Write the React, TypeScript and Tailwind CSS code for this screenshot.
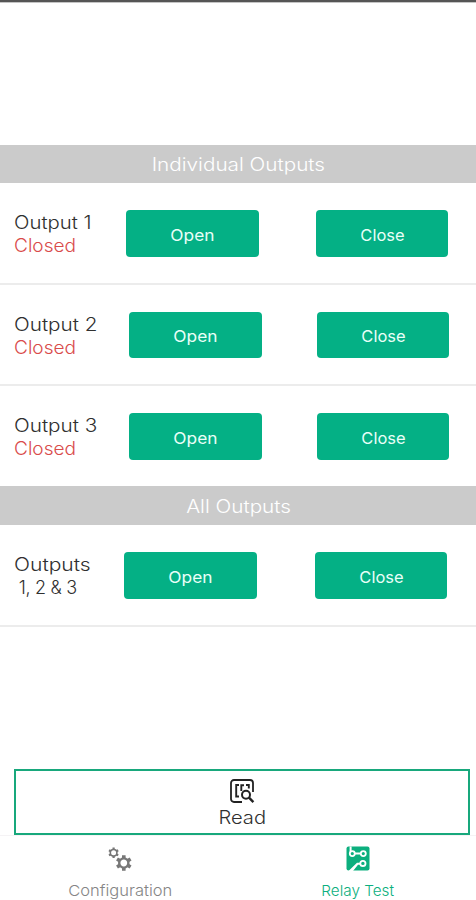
import React from "react";

type RowProps = {
  label: string;
  second: string;
  labelClass: string;
  secondClass: string;
  rowClass: string;
  openClass: string;
  closeClass: string;
};

const actionButton =
  "shrink-0 rounded-[4px] bg-[#04b085] text-center text-[16px] font-normal text-[#e9fff8]";

function OutputRow({ label, second, labelClass, secondClass, rowClass, openClass, closeClass }: RowProps) {
  return (
    <div className={`flex shrink-0 pl-[14px] pt-[27px] ${rowClass}`}>
      <div className="shrink-0 whitespace-pre pt-px text-[18px] leading-[23px]">
        <div className={`origin-left ${labelClass}`}>{label}</div>
        <div className={`origin-left ${secondClass}`}>{second}</div>
      </div>
      <button className={`${actionButton} ${openClass}`}>
        <span className="inline-block scale-x-[1.08]">Open</span>
      </button>
      <button className={`${actionButton} ${closeClass}`}>
        <span className="inline-block scale-x-[1.03]">Close</span>
      </button>
    </div>
  );
}

function SectionHeader({ children, className }: { children: React.ReactNode; className: string }) {
  return (
    <div className={`shrink-0 bg-[#cbcbcb] text-center text-[18px] font-light text-white ${className}`}>
      <span className="inline-block scale-x-[1.15]">{children}</span>
    </div>
  );
}

function ReadIcon() {
  return (
    <svg className="h-[26px] w-[26px] shrink-0" viewBox="0 0 26 26" fill="none" stroke="#222">
      <path d="M13 24H5a3 3 0 0 1-3-3V5a3 3 0 0 1 3-3h16a3 3 0 0 1 3 3v9" strokeWidth="1.8" />
      <path d="M10 7H7.2v11.5H10M12.3 13V7.3H15M17 7h2.8v3.5" strokeWidth="1.9" />
      <circle cx="17" cy="16.7" r="4" strokeWidth="2" fill="white" />
      <path d="m20 19.7 4.4 4.4" strokeWidth="2.4" />
    </svg>
  );
}

function GearsIcon() {
  return (
    <svg className="h-[26px] w-[26px] shrink-0" viewBox="0 0 26 26" fill="none" stroke="#777">
      <g transform="translate(6.6 7.8)">
        <circle r="3.3" strokeWidth="1.6" />
        <path d="M0-3.2V-5.3M0 3.2V5.3M2.8-1.6l1.8-1M-2.8-1.6l-1.8-1M2.8 1.6l1.8 1M-2.8 1.6l-1.8 1" strokeWidth="2.2" />
      </g>
      <g transform="translate(16.8 18)">
        <circle r="4.6" strokeWidth="2.4" />
        <path d="M0-4.7V-7.8M0 4.7V7.8M4.1-2.4l2.7-1.6M-4.1-2.4l-2.7-1.6M4.1 2.4l2.7 1.6M-4.1 2.4l-2.7 1.6" strokeWidth="3.6" />
      </g>
    </svg>
  );
}

function RelayIcon() {
  return (
    <svg className="h-[25px] w-[24px] shrink-0" viewBox="0 0 24 25" fill="none">
      <rect x="0.5" y="0.5" width="23" height="24" rx="2" fill="#0caf7e" />
      <path d="M4.6 0.5v5M9 7.6h6" stroke="white" strokeWidth="2" />
      <path d="M2.5 25 11 16.8h3.5v2H12L7 25Z" fill="white" />
      <g fill="#0caf7e" stroke="white" strokeWidth="1.8">
        <circle cx="6.3" cy="7.6" r="2.5" />
        <circle cx="17.3" cy="7.6" r="2.5" />
        <circle cx="16.9" cy="17.4" r="2.6" />
      </g>
    </svg>
  );
}

export default function App() {
  return (
    <main className="flex h-[900px] w-[476px] flex-col overflow-hidden bg-white font-['Inter',sans-serif] font-light text-[#303030]">
      <div className="h-[3px] shrink-0 border-b border-[#c4c4c4] bg-[#555]" />
      <div className="h-[142px] shrink-0" />
      <SectionHeader className="h-[38px] leading-[40px]">Individual Outputs</SectionHeader>
      <OutputRow
        label="Output 1"
        second="Closed"
        labelClass="scale-x-[1.13]"
        secondClass="scale-x-[1.06] text-[#d94b4b]"
        rowClass="h-[102px] border-b-2 border-[#ececec]"
        openClass="ml-auto h-[47px] w-[133px] leading-[50px]"
        closeClass="ml-[57px] mr-[28px] h-[47px] w-[132px] leading-[50px]"
      />
      <OutputRow
        label="Output 2"
        second="Closed"
        labelClass="scale-x-[1.15]"
        secondClass="scale-x-[1.06] text-[#d94b4b]"
        rowClass="h-[101px] border-b-2 border-[#ececec]"
        openClass="ml-auto h-[46px] w-[133px] leading-[48px]"
        closeClass="ml-[55px] mr-[27px] h-[46px] w-[132px] leading-[48px]"
      />
      <OutputRow
        label="Output 3"
        second="Closed"
        labelClass="scale-x-[1.15]"
        secondClass="scale-x-[1.06] text-[#d94b4b]"
        rowClass="h-[100px]"
        openClass="ml-auto h-[47px] w-[133px] leading-[50px]"
        closeClass="ml-[55px] mr-[27px] h-[47px] w-[132px] leading-[50px]"
      />
      <SectionHeader className="h-[39px] pl-[2px] leading-[42px]">All Outputs</SectionHeader>
      <OutputRow
        label="Outputs"
        second=" 1, 2 & 3"
        labelClass="scale-x-[1.17]"
        secondClass="tracking-[-0.3px]"
        rowClass="h-[102px] border-b-2 border-[#ececec]"
        openClass="ml-auto h-[47px] w-[133px] leading-[50px]"
        closeClass="ml-[58px] mr-[29px] h-[47px] w-[132px] leading-[50px]"
      />
      <div className="h-[142px] shrink-0" />
      <button className="ml-[14px] flex h-[66px] w-[456px] shrink-0 flex-col items-center border-2 border-[#18a87c] pt-[7px] text-[18px] leading-[24px]">
        <ReadIcon />
        <span className="mt-[2px] scale-x-[1.12]">Read</span>
      </button>
      <nav className="flex h-[65px] shrink-0 border-t border-[#f5f3f5] text-[15px] leading-[20px]">
        <div className="flex w-[240px] flex-col items-center pt-[9px] text-[#858585]">
          <GearsIcon />
          <span className="mt-[10px] scale-x-[1.1]">Configuration</span>
        </div>
        <div className="flex w-[236px] flex-col items-center pt-[10px] text-[#0caf7e]">
          <RelayIcon />
          <span className="mt-[10px] scale-x-[1.02]">Relay Test</span>
        </div>
      </nav>
    </main>
  );
}
